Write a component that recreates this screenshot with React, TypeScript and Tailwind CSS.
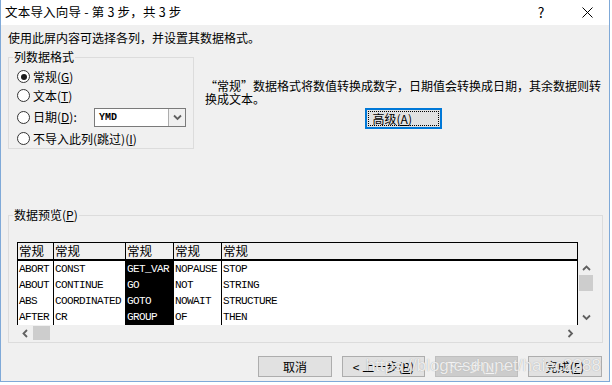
import React from "react";

const cn = "font-['Noto_Sans_CJK_SC',sans-serif]";
const mono = "font-['Liberation_Mono',monospace]";

const columns = [
  { w: "w-[35px]", first: true, rows: ["ABORT", "ABOUT", "ABS", "AFTER"] },
  { w: "w-[72px]", rows: ["CONST", "CONTINUE", "COORDINATED", "CR"] },
  { w: "w-[48px]", selected: true, rows: ["GET_VAR", "GO", "GOTO", "GROUP"] },
  { w: "w-[48px]", rows: ["NOPAUSE", "NOT", "NOWAIT", "OF"] },
  { w: "flex-1", rows: ["STOP", "STRING", "STRUCTURE", "THEN"] },
];

function Radio({ checked }: { checked?: boolean }) {
  return (
    <span className="w-[13px] h-[13px] rounded-full border border-[#333333] bg-white flex items-center justify-center shrink-0">
      {checked && <span className="w-[6px] h-[6px] rounded-full bg-[#1a1a1a]" />}
    </span>
  );
}

function Chevron({ dir }: { dir: "up" | "down" | "left" | "right" }) {
  const d = {
    up: "M1 5 L4.5 1.5 L8 5",
    down: "M1 1.5 L4.5 5 L8 1.5",
    left: "M5 1 L1.5 4.5 L5 8",
    right: "M1.5 1 L5 4.5 L1.5 8",
  }[dir];
  const vertical = dir === "up" || dir === "down";
  return (
    <svg width={vertical ? 9 : 7} height={vertical ? 7 : 9} viewBox={vertical ? "0 0 9 7" : "0 0 7 9"}>
      <path d={d} fill="none" stroke="#606060" strokeWidth="1.8" />
    </svg>
  );
}

function Key({ k }: { k: string }) {
  return (
    <>
      (<span className="underline underline-offset-1">{k}</span>)
    </>
  );
}

function Button({ children, disabled }: { children: React.ReactNode; disabled?: boolean }) {
  return (
    <div
      className={`h-[21px] flex items-center justify-center border text-[12px] ${
        disabled ? "bg-[#cccccc] border-[#bfbfbf] text-[#f4f4f4]" : "bg-[#e1e1e1] border-[#adadad] text-black"
      }`}
    >
      {children}
    </div>
  );
}

export default function App() {
  return (
    <div className={`w-[612px] h-[385px] bg-white overflow-hidden relative ${cn}`}>
      <div className="w-[610px] h-[382px] border border-t-0 border-[#7fa9d8] flex flex-col">
        {/* title bar */}
        <div className="h-[25px] bg-white flex items-center pl-[4px] shrink-0">
          <span className="text-[12.5px] text-black tracking-[0.2px]">文本导入向导 - 第 3 步，共 3 步</span>
          <span className="ml-auto w-[20px] text-center text-[14px] text-black mr-[26px]">?</span>
          <span className="w-[20px] flex justify-center mr-[12px]">
            <svg width="11" height="11" viewBox="0 0 11 11">
              <path d="M0.5 0.5 L10.5 10.5 M10.5 0.5 L0.5 10.5" stroke="#000" strokeWidth="1" />
            </svg>
          </span>
        </div>

        <div className="flex-1 bg-[#f0f0f0] flex flex-col text-[12px] text-black">
          <p className="mt-[6px] ml-[7px] leading-[14px]">使用此屏内容可选择各列，并设置其数据格式。</p>

          <div className="flex mt-[12px]">
            {/* 列数据格式 */}
            <div className="relative ml-[7px] w-[186px] h-[92px] border border-[#dcdcdc] pt-[9px] pl-[8px] flex flex-col">
              <span className="absolute -top-[8px] left-[4px] bg-[#f0f0f0] px-[1px] leading-[14px]">列数据格式</span>
              <div className="h-[19px] flex items-center gap-[3px]">
                <Radio checked />
                <span>常规<Key k="G" /></span>
              </div>
              <div className="h-[19px] flex items-center gap-[3px]">
                <Radio />
                <span>文本<Key k="T" /></span>
              </div>
              <div className="h-[24px] flex items-center gap-[3px]">
                <Radio />
                <span className="w-[58px]">日期<Key k="D" />:</span>
                <div className="w-[92px] h-[19px] border border-[#7a7a7a] bg-white flex">
                  <span className={`flex-1 pl-[4px] leading-[17px] text-[10px] font-bold ${mono}`}>YMD</span>
                  <span className="w-[17px] border-l border-[#adadad] bg-[#f0f0f0] flex items-center justify-center">
                    <Chevron dir="down" />
                  </span>
                </div>
              </div>
              <div className="h-[19px] flex items-center gap-[3px]">
                <Radio />
                <span>不导入此列(跳过)<Key k="I" /></span>
              </div>
            </div>

            {/* description */}
            <div className="ml-[11px] w-[396px] flex flex-col items-center">
              <p className="self-start mt-[22px] leading-[13px] whitespace-nowrap">
                “常规”数据格式将数值转换成数字，日期值会转换成日期，其余数据则转
                <br />
                换成文本。
              </p>
              <div className="mt-[3px] w-[77px] h-[21px] border-2 border-[#0078d7] bg-[#e1e1e1] p-[1px]">
                <div className="h-full border border-dotted border-black flex items-center pl-[4px] leading-none">
                  高级<Key k="A" />
                </div>
              </div>
            </div>
          </div>

          {/* 数据预览 */}
          <div className="relative ml-[7px] mt-[66px] w-[595px] h-[128px] border border-[#dcdcdc] pt-[26px] pl-[8px]">
            <span className="absolute -top-[8px] left-[4px] bg-[#f0f0f0] px-[1px] leading-[14px]">
              数据预览<Key k="P" />
            </span>
            <div className="flex">
              <div className="flex flex-col">
                <div className="w-[561px] h-[83px] border border-b-0 border-black flex flex-col overflow-hidden">
                  <div className="h-[18px] flex bg-[#f0f0f0] border-b-2 border-black shrink-0">
                    {columns.map((c, i) => (
                      <div key={i} className={`${c.w} ${c.first ? "" : "border-l border-black"} leading-[15px] pl-[1px] text-[12.5px]`}>
                        常规
                      </div>
                    ))}
                  </div>
                  <div className="flex flex-1 bg-white">
                    {columns.map((c, i) => (
                      <div
                        key={i}
                        className={`${c.w} ${c.first ? "" : "border-l border-black"} ${
                          c.selected ? "bg-black text-white" : "text-black"
                        } flex flex-col ${mono} text-[11px] tracking-[-0.6px] overflow-hidden whitespace-nowrap`}
                      >
                        {c.rows.map((r) => (
                          <div key={r} className="h-[16px] leading-[16px] pl-[1px]">
                            {r}
                          </div>
                        ))}
                      </div>
                    ))}
                  </div>
                </div>
                <div className="w-[561px] h-[16px] flex">
                  <div className="w-[16px] flex items-center justify-center">
                    <Chevron dir="left" />
                  </div>
                  <div className="w-[17px] bg-[#cdcdcd] my-[1px]" />
                  <div className="flex-1" />
                  <div className="w-[16px] flex items-center justify-center">
                    <Chevron dir="right" />
                  </div>
                </div>
              </div>
              <div className="w-[16px] h-[83px] flex flex-col">
                <div className="h-[19px]" />
                <div className="h-[14px] flex items-center justify-center">
                  <Chevron dir="up" />
                </div>
                <div className="h-[16px] bg-[#cdcdcd] mx-[1px]" />
                <div className="flex-1" />
                <div className="h-[16px] flex items-center justify-center">
                  <Chevron dir="down" />
                </div>
              </div>
            </div>
          </div>

          {/* buttons */}
          <div className="relative flex justify-end gap-[10px] mt-[13px] pr-[7px]">
            <div className="w-[74px]">
              <Button>取消</Button>
            </div>
            <div className="w-[83px]">
              <Button>&lt; 上一步<Key k="B" /></Button>
            </div>
            <div className="w-[83px]">
              <Button disabled>下一步<Key k="N" /> &gt;</Button>
            </div>
            <div className="w-[74px]">
              <Button>完成<Key k="F" /></Button>
            </div>
            <span className="absolute right-[8px] -top-[1px] text-[17px] leading-[22px] font-['Liberation_Sans',sans-serif] text-white/80 [text-shadow:0_0_1px_#9a9a9a] pointer-events-none">
              https://blog.csdn.net/haiec2288
            </span>
          </div>
        </div>
      </div>
    </div>
  );
}
